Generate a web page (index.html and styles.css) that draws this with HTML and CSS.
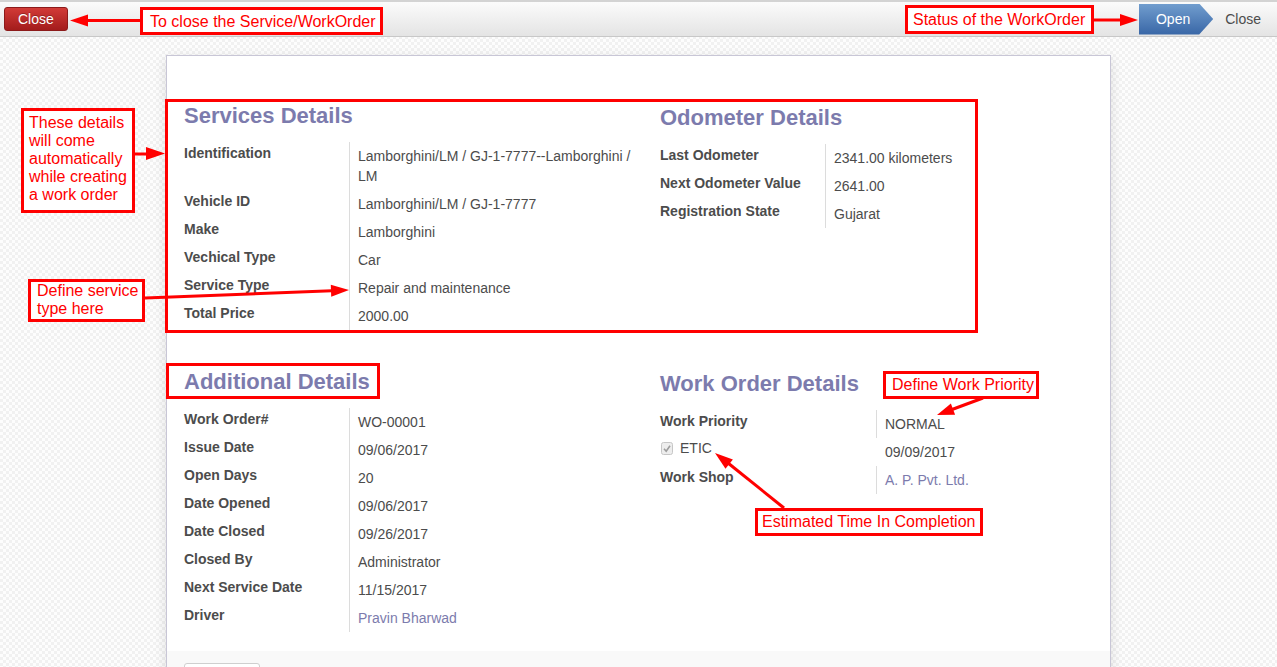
FILE: index.html
```html
<!DOCTYPE html>
<html>
<head>
<meta charset="utf-8">
<title>Work Order</title>
<link rel="stylesheet" href="styles.css">
</head>
<body>
<header class="topbar">
  <button class="btn-close">Close</button>
  <ul class="statusbar">
    <li class="st active">Open</li>
    <li class="st">Close</li>
  </ul>
</header>

<main class="sheetbg">
  <div class="sheet">
    <div class="sheet-body">
      <div class="group-row">
        <section class="group">
          <h2>Services Details</h2>
          <div class="fields">
            <div class="lbl">Identification</div><div class="val">Lamborghini/LM / GJ-1-7777--Lamborghini / LM</div>
            <div class="lbl">Vehicle ID</div><div class="val">Lamborghini/LM / GJ-1-7777</div>
            <div class="lbl">Make</div><div class="val">Lamborghini</div>
            <div class="lbl">Vechical Type</div><div class="val">Car</div>
            <div class="lbl">Service Type</div><div class="val">Repair and maintenance</div>
            <div class="lbl">Total Price</div><div class="val">2000.00</div>
          </div>
        </section>
        <section class="group offset">
          <h2>Odometer Details</h2>
          <div class="fields">
            <div class="lbl">Last Odometer</div><div class="val">2341.00 kilometers</div>
            <div class="lbl">Next Odometer Value</div><div class="val">2641.00</div>
            <div class="lbl">Registration State</div><div class="val">Gujarat</div>
          </div>
        </section>
      </div>

      <div class="group-row row2">
        <section class="group">
          <h2>Additional Details</h2>
          <div class="fields">
            <div class="lbl">Work Order#</div><div class="val">WO-00001</div>
            <div class="lbl">Issue Date</div><div class="val">09/06/2017</div>
            <div class="lbl">Open Days</div><div class="val">20</div>
            <div class="lbl">Date Opened</div><div class="val">09/06/2017</div>
            <div class="lbl">Date Closed</div><div class="val">09/26/2017</div>
            <div class="lbl">Closed By</div><div class="val">Administrator</div>
            <div class="lbl">Next Service Date</div><div class="val">11/15/2017</div>
            <div class="lbl">Driver</div><div class="val"><span class="link">Pravin Bharwad</span></div>
          </div>
        </section>
        <section class="group offset">
          <h2>Work Order Details</h2>
          <div class="fields wide">
            <div class="lbl">Work Priority</div><div class="val">NORMAL</div>
            <div class="lbl check"><span class="cb"><svg width="12" height="13" viewBox="0 0 12 13"><rect x="0.5" y="0.5" width="11" height="12" rx="2" fill="#ededed" stroke="#c6c6c6"/><path d="M3 6.8 L5.2 9.2 L9 3.8" fill="none" stroke="#9c9c9c" stroke-width="1.6"/></svg></span>ETIC</div><div class="val noline">09/09/2017</div>
            <div class="lbl">Work Shop</div><div class="val"><span class="link">A. P. Pvt. Ltd.</span></div>
          </div>
        </section>
      </div>
    </div>
    <div class="chatter"><button class="chat-btn" aria-label="Send a message"></button></div>
  </div>
</main>

<div class="frame f-services"></div>
<div class="frame f-additional"></div>
<div class="annot a-close">To close the Service/WorkOrder</div>
<div class="annot a-status">Status of the WorkOrder</div>
<div class="annot a-details">These details<br>will come<br>automatically<br>while creating<br>a work order</div>
<div class="annot a-service">Define service<br>type here</div>
<div class="annot a-priority">Define Work Priority</div>
<div class="annot a-etic">Estimated Time In Completion</div>

<svg class="arrows" width="1277" height="667" viewBox="0 0 1277 667">
  <g stroke="#f00" stroke-width="3" fill="none">
    <line x1="87" y1="20.5" x2="140" y2="20.5"/>
    <line x1="1094" y1="20" x2="1121" y2="20"/>
    <line x1="135" y1="154" x2="147" y2="154"/>
    <line x1="145" y1="298" x2="332" y2="290.7"/>
    <line x1="983" y1="398" x2="952" y2="409.5"/>
    <line x1="784" y1="508" x2="728" y2="463"/>
  </g>
  <g fill="#f00">
    <polygon points="70,20.5 88,14.5 88,26.5"/>
    <polygon points="1138,20 1120,14 1120,26"/>
    <polygon points="165,153.5 146,147 146,160"/>
    <polygon points="349,290 331.2,296.7 330.8,284.7"/>
    <polygon points="937,415 950.9,403.5 955.1,414.7"/>
    <polygon points="715,453 732.9,459.4 725.5,468.8"/>
  </g>
</svg>
</body>
</html>
```
FILE: styles.css
```css
html, body {
  margin: 0;
  height: 667px;
  overflow: hidden;
}

body {
  position: relative;
  font-family: "Liberation Sans", Arial, sans-serif;
  font-size: 14px;
  color: #4c4c4c;
  background-color: #fdfdfd;
  background-image: conic-gradient(#f1f1f1 25%, #fdfdfd 0 50%, #f1f1f1 0 75%, #fdfdfd 0);
  background-size: 6px 6px;
}

/* ---------- top bar ---------- */
.topbar {
  display: flex;
  align-items: center;
  height: 34px;
  padding-left: 4px;
  border-top: 2px solid #d3d3d3;
  border-bottom: 1px solid #c8c8c8;
  background: linear-gradient(#fbfbfb, #e4e4e4);
}

.btn-close {
  height: 24px;
  padding: 0 13px;
  font-family: "Liberation Sans", Arial, sans-serif;
  font-size: 14px;
  color: #fff;
  background: linear-gradient(#d23b37, #a31c1c);
  border: 1px solid #8c1a1a;
  border-radius: 3px;
  text-shadow: 0 -1px 0 rgba(0, 0, 0, 0.25);
}

.statusbar {
  display: flex;
  align-items: center;
  height: 31px;
  margin: 0 0 0 auto;
  padding: 0;
  list-style: none;
}

.st {
  height: 31px;
  line-height: 31px;
  padding: 0 16px 0 12px;
  color: #4c4c4c;
}

.st.active {
  padding: 0 23px 0 17px;
  color: #fff;
  background: linear-gradient(#719dce, #3866a6);
  clip-path: polygon(0 0, calc(100% - 14px) 0, 100% 50%, calc(100% - 14px) 100%, 0 100%);
}

/* ---------- sheet ---------- */
.sheetbg {
  padding-top: 18px;
}

.sheet {
  box-sizing: border-box;
  width: 945px;
  margin: 0 auto;
  background: #fff;
  border: 1px solid #c8c6d6;
  box-shadow: 0 4px 12px rgba(0, 0, 0, 0.12);
}

.sheet-body {
  padding: 47px 17px 19px;
}

.group-row {
  display: grid;
  grid-template-columns: 476px 1fr;
}

.row2 {
  margin-top: 39px;
}

.group h2 {
  margin: 0 0 14px;
  font-size: 22px;
  line-height: 25px;
  font-weight: bold;
  color: #7c7bad;
}

.offset {
  margin-top: 2px;
}

.fields {
  display: grid;
  grid-template-columns: 165px 1fr;
  line-height: 20px;
}

.fields.wide {
  grid-template-columns: 216px 1fr;
}

.lbl {
  font-weight: bold;
  padding-top: 1px;
}

.lbl.check {
  display: flex;
  align-items: center;
  align-self: start;
  gap: 7px;
  padding-top: 0;
  height: 20px;
  font-weight: normal;
}

.cb {
  display: flex;
  margin-left: 1px;
}

.val {
  border-left: 1px solid #dcdcdc;
  padding: 4px 20px 4px 8px;
}

.val.noline {
  border-left-color: transparent;
}

.link {
  color: #7c7bad;
}

.chatter {
  padding: 12px 17px;
  background: #f9f9f9;
}

.chat-btn {
  display: block;
  width: 76px;
  height: 26px;
  background: #fff;
  border: 1px solid #cfcfcf;
  border-radius: 3px;
}

/* ---------- annotations ---------- */
.frame {
  position: absolute;
  box-sizing: border-box;
  border: 3px solid #f00;
}

.f-services {
  left: 165px;
  top: 99px;
  width: 813px;
  height: 234px;
}

.f-additional {
  left: 166px;
  top: 363px;
  width: 214px;
  height: 36px;
}

.annot {
  position: absolute;
  box-sizing: border-box;
  border: 3px solid #f00;
  background: #fff;
  color: #f00;
  font-size: 16px;
  line-height: 18px;
  white-space: nowrap;
}

.a-close {
  left: 140px;
  top: 7px;
  width: 243px;
  height: 28px;
  padding: 3px 7px 1px;
}

.a-status {
  left: 905px;
  top: 5px;
  width: 189px;
  height: 29px;
  padding: 3px 5px;
}

.a-details {
  left: 21px;
  top: 108px;
  width: 114px;
  height: 105px;
  padding: 3px 5px 1px;
}

.a-service {
  left: 28px;
  top: 279px;
  width: 117px;
  height: 43px;
  padding: 0 6px;
}

.a-priority {
  left: 883px;
  top: 371px;
  width: 156px;
  height: 28px;
  padding: 2px 3px 0 6px;
}

.a-etic {
  left: 755px;
  top: 508px;
  width: 228px;
  height: 28px;
  padding: 2px 4px 0;
}

.arrows {
  position: absolute;
  left: 0;
  top: 0;
  pointer-events: none;
}
```
